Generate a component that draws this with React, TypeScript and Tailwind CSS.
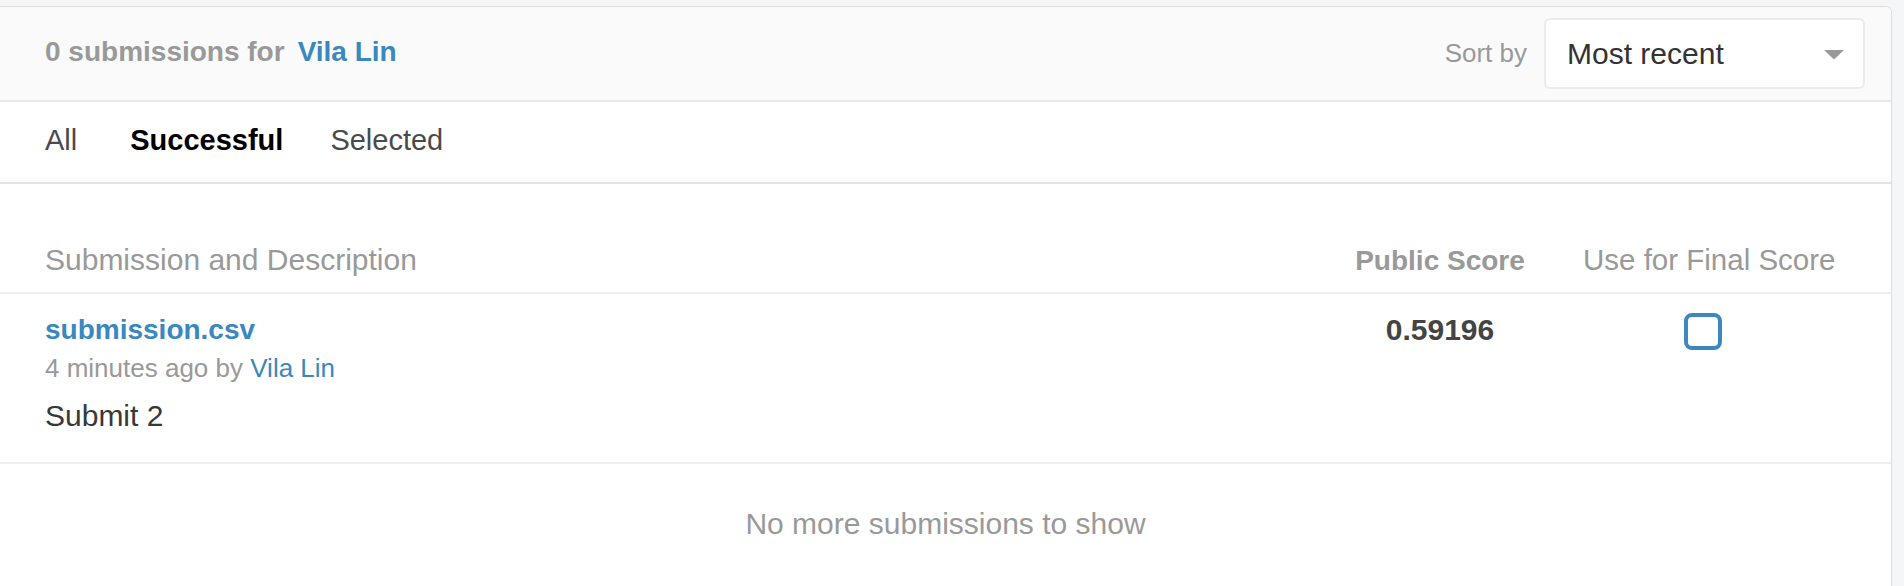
export default function App() {
  return (
    <div className="w-full h-[586px] bg-[#f5f6f8] pt-[6px] overflow-hidden font-['Liberation_Sans',Arial,sans-serif]">
      <div className="mr-[12px] h-[620px] bg-white border-t border-r border-[#dcdcdc] rounded-tr-[6px] overflow-hidden">
        {/* Header */}
        <div className="h-[95px] bg-[#fafafa] border-b-2 border-[#e8e8e8] flex items-center justify-between pl-[45px] pr-[26px]">
          <div className="text-[28px] leading-[28px] font-bold text-[#999999] mb-[4px] whitespace-nowrap">
            0 submissions for
            <a className="text-[#3a88bd] ml-[13px]">Vila Lin</a>
          </div>
          <div className="flex items-center">
            <span className="text-[26px] leading-[26px] text-[#999999] mr-[17px] mb-[2px]">Sort by</span>
            <div className="w-[321px] h-[71px] rounded-[6px] border-2 border-[#ebebeb] bg-white flex items-center justify-between pl-[21px] pr-[19px]">
              <span className="text-[30px] leading-[30px] text-[#333333]">Most recent</span>
              <svg width="20" height="10" viewBox="0 0 20 10" className="mt-[2px]">
                <path d="M0 0H20L10 9.5Z" fill="#999999" />
              </svg>
            </div>
          </div>
        </div>

        {/* Tabs */}
        <div className="h-[82px] border-b-2 border-[#e4e4e4] flex items-start pt-[24px] pl-[45px] text-[29px] leading-[29px]">
          <span className="text-[#4a4a4a] mr-[53px]">All</span>
          <span className="text-black font-bold mr-[47px]">Successful</span>
          <span className="text-[#4a4a4a]">Selected</span>
        </div>

        {/* Table header */}
        <div className="h-[110px] border-b-2 border-[#eeeeee] flex items-baseline pt-[61px]">
          <div className="flex-1 pl-[45px] text-[30px] leading-[30px] text-[#999999]">Submission and Description</div>
          <div className="w-[180px] text-center text-[28px] leading-[28px] font-bold text-[#999999] whitespace-nowrap">Public Score</div>
          <div className="w-[361px] pl-[53px] text-[29.5px] leading-[29.5px] text-[#999999] whitespace-nowrap">Use for Final Score</div>
        </div>

        {/* Row */}
        <div className="h-[170px] border-b-2 border-[#eeeeee] flex items-start">
          <div className="flex-1 pl-[45px] pt-[22px] flex flex-col items-start">
            <a className="text-[28px] leading-[28px] font-bold text-[#3a88bd]">submission.csv</a>
            <div className="mt-[11px] text-[26px] leading-[26px] text-[#999999]">
              4 minutes ago by <a className="text-[#3a88bd]">Vila Lin</a>
            </div>
            <div className="mt-[20px] text-[30px] leading-[30px] text-[#383838]">Submit 2</div>
          </div>
          <div className="w-[180px] pt-[21px] text-center text-[30px] leading-[30px] font-bold text-[#444444]">0.59196</div>
          <div className="w-[361px] pl-[154px] pt-[19px]">
            <div className="w-[38px] h-[37px] rounded-[8px] border-4 border-[#3a88bd] bg-white" />
          </div>
        </div>

        {/* Footer */}
        <div className="pt-[45px] text-center text-[30px] leading-[30px] text-[#999999]">No more submissions to show</div>
      </div>
    </div>
  );
}
